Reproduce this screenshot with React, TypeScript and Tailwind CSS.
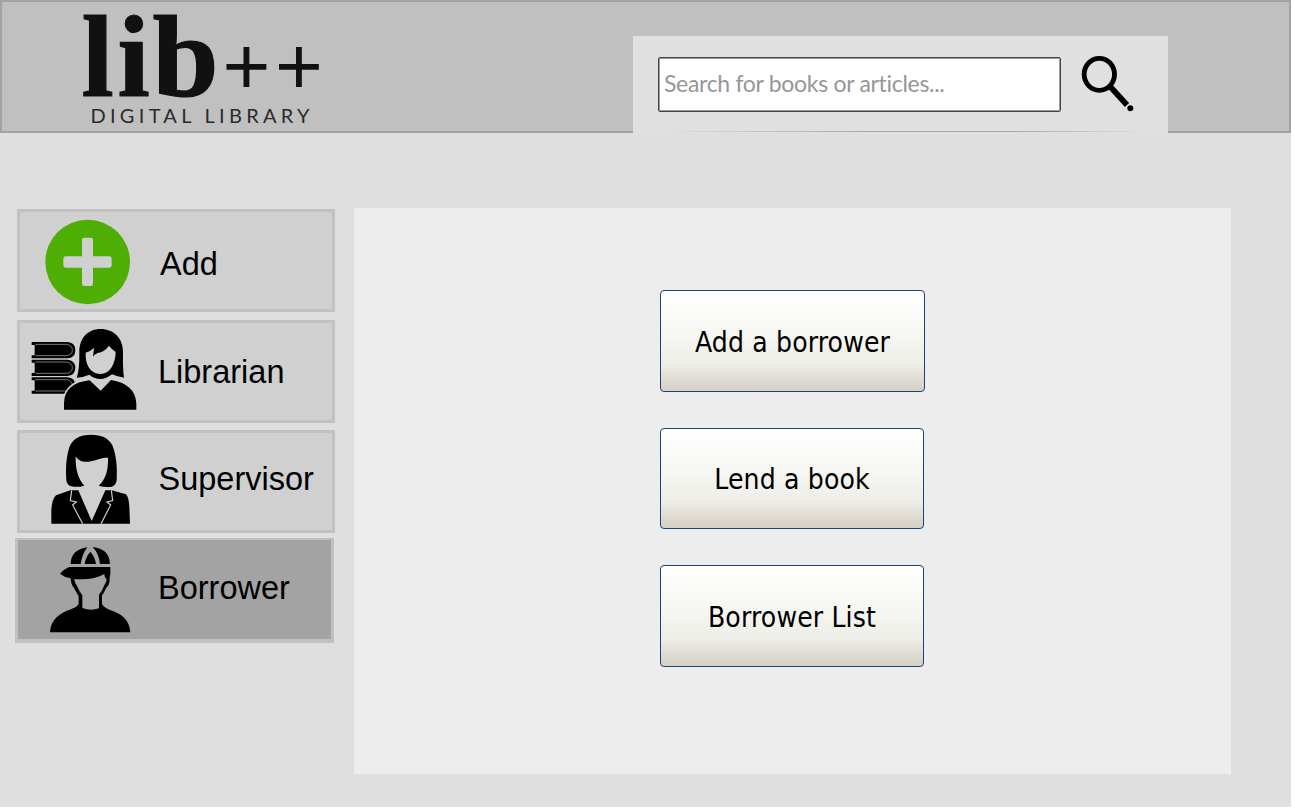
import React from "react";

function Logo() {
  return (
    <svg className="ml-[70px] h-[133px] w-[270px] shrink-0 overflow-visible" viewBox="0 0 270 133" fill="#111">
      <g fontFamily="'Liberation Serif', serif" fontWeight="700" fontSize="116" stroke="#111" strokeWidth="1.2">
        <text x="11.500" y="96">l</text>
        <text x="47.500" y="96">i</text>
        <text x="82.500" y="96" textLength="66" lengthAdjust="spacingAndGlyphs">b</text>
      </g>
      <g fontFamily="'Liberation Sans', sans-serif" fontSize="82">
        <text x="152.500" y="93.500">+</text>
        <text x="205" y="93.500">+</text>
      </g>
      <text x="20.500" y="122.500" fontFamily="Lato, sans-serif" fontSize="20" textLength="219" fill="#2b2b2b">
        DIGITAL LIBRARY
      </text>
    </svg>
  );
}

function SearchIcon() {
  return (
    <svg className="-mt-[2px] ml-[17px] h-[60px] w-[60px]" viewBox="114 84 180 180" fill="none" stroke="#000">
      <ellipse cx="178" cy="148" rx="45.500" ry="48" strokeWidth="14.500" />
      <path d="M209 183L261 240" strokeWidth="17" />
      <circle cx="271" cy="250" r="9" fill="#000" stroke="none" />
    </svg>
  );
}

function AddIcon() {
  return (
    <svg className="h-[97px] w-[130px] shrink-0" viewBox="30 36 390 291">
      <circle cx="233" cy="186" r="127" fill="#4fae03" />
      <path
        fill="#d0d0d0"
        d="M223 113h19q7 0 7 7v49h49q7 0 7 7v20q0 7-7 7h-49v48q0 7-7 7h-19q-7 0-7-7v-48h-49q-7 0-7-7v-20q0-7 7-7h49v-49q0-7 7-7z"
      />
    </svg>
  );
}

function LibrarianIcon() {
  return (
    <svg className="h-[97px] w-[130px] shrink-0" viewBox="30 24 390 291">
      <g>
        {[81, 134, 187].map((y) => (
          <g key={y} transform={`translate(0 ${y})`}>
            <path d="M65 0H172Q196 2 196 24.500Q196 47 172 49H65V40H74V9H65Z" />
            <path d="M76 7H170Q187 10 187 24.500Q187 39 170 41H76" fill="none" stroke="#777" strokeWidth="3" />
          </g>
        ))}
      </g>
      <path
        d="M155 291V270Q157 222 199 199Q217 190 240 188L228 176H192Q202 160 202 100L232 30H310L350 100V190L305 188Q350 193 370 222Q386 244 386 291Z"
        fill="#d0d0d0"
      />
      <path
        fillRule="evenodd"
        d="M200 188Q209 165 208 111C208 67 236 42 271 42C312 42 339 70 339 111Q338 165 342 188Q324 186 306 178Q289 192 271 192Q254 192 238 179Q220 187 200 188ZM227 113C225 148 241 176 271 177C300 176 316 148 317 111Q306 104 297 92Q283 111 263 114Q254 118 249 125L252 98Q243 108 227 113Z"
      />
      <path d="M162 284V263C164 222 191 201 239 196L272 227L303 195C350 202 377 226 379 265V284Z" />
    </svg>
  );
}

function SupervisorIcon() {
  return (
    <svg className="h-[97px] w-[130px] shrink-0" viewBox="30 24 390 291">
      <path d="M244 29C208 29 187 42 178 67C168 98 167 132 169 165Q170 180 184 184Q202 188 223 182C204 163 196 132 197 94C205 107 219 114 243 109C264 104 277 97 294 98C295 131 289 162 266 182Q285 188 305 185Q319 181 320 164C322 128 319 90 307 61C296 39 274 29 244 29Z" />
      <path d="M124 296V256Q126 221 138 211L181 196H205L245 288L286 196H305L348 208Q356 216 358 245L360 296Z" />
      <path
        d="M185 196L181 227L199 231L188 240L218 296M304 196L308 227L291 231L302 240L273 296"
        fill="none"
        stroke="#d0d0d0"
        strokeWidth="3.5"
      />
    </svg>
  );
}

function BorrowerIcon() {
  return (
    <svg className="h-[99px] w-[130px] shrink-0" viewBox="24 21 390 297">
      <path d="M182 93Q183 50 232 43Q217 62 212 93ZM248 42Q298 47 300 93H270Q267 62 248 42ZM224 93Q227 72 241 56Q255 72 258 93Z" />
      <path
        fillRule="evenodd"
        d="M150 122Q161 109 177 102H301V123Q299 129 299 141Q298 157 289 164Q281 181 276 187V212Q279 222 300 231C334 242 359 260 361 298H120C122 260 148 241 183 229Q205 221 206 211V190Q199 178 192 165Q183 157 182 136Q163 133 150 122ZM193 138Q194 151 201 158Q207 174 217 187V225Q241 235 267 226V185Q278 172 282 158Q290 149 290 139Q282 132 283 123Q252 142 193 138Z"
      />
    </svg>
  );
}

const row = "ml-[17px] flex h-[103px] w-[318px] items-center border-[3px] border-[#c1c1c1] bg-[#d0d0d0]";
const label = "whitespace-nowrap text-[32.5px] leading-none";

function ActionButton({ children, className }: { children: React.ReactNode; className: string }) {
  return (
    <button
      className={`flex items-center justify-center rounded-[4px] border border-[#164677] bg-[linear-gradient(180deg,#ffffff_0%,#f8f8f5_35%,#eeeee8_73%,#e2ded6_86%,#d6d0c5_100%)] pt-[3px] font-['DejaVu_Sans_Condensed','DejaVu_Sans',sans-serif] text-[28px] font-normal leading-none tracking-[0.15px] text-black [font-stretch:condensed] ${className}`}
    >
      {children}
    </button>
  );
}

export default function App() {
  return (
    <div className="h-[810px] w-[1295px] overflow-hidden bg-white font-['Liberation_Sans',Arial,sans-serif] text-black">
      <div className="flex h-[807px] w-[1291px] flex-col bg-[#dfdfdf]">
        <header className="flex h-[133px] shrink-0 items-end bg-[#c0c0c0] shadow-[inset_0_0_0_2px_#a3a3a3]">
          <Logo />
          <div className="ml-[293px] flex h-[97px] w-[535px] flex-col bg-[#e0e0e0]">
            <div className="flex h-[95px] items-center pl-[25px]">
              <input
                className="mt-[2px] h-[55px] w-[403px] rounded-[2px] border border-[#444] bg-white px-[5px] pb-[3px] font-[Lato,sans-serif] text-[23px] tracking-[-0.3px] text-black shadow-[inset_0_0_0_1px_#9a9a9a] outline-none placeholder:text-[#969696]"
                placeholder="Search for books or articles..."
              />
              <SearchIcon />
            </div>
            <div className="h-px bg-[linear-gradient(90deg,transparent_5%,#a5a5a5_45%,#a5a5a5_70%,transparent_96%)]" />
          </div>
        </header>

        <div className="flex grow items-start">
          <nav className="flex w-[354px] flex-col pt-[76px]">
            <div className={row}>
              <AddIcon />
              <span className={`${label} ml-[10px] mt-[8px]`}>Add</span>
            </div>
            <div className={`${row} mt-2`}>
              <LibrarianIcon />
              <span className={`${label} ml-[8px] mt-[2px]`}>Librarian</span>
            </div>
            <div className={`${row} mt-[7px]`}>
              <SupervisorIcon />
              <span className={`${label} mb-[4px] ml-[8.5px]`}>Supervisor</span>
            </div>
            <div className="ml-[15px] mt-[5px] flex h-[105px] w-[319px] items-center border-x-[3px] border-b-4 border-t-2 border-[#c0c0c0] bg-[#a3a3a3]">
              <BorrowerIcon />
              <span className={`${label} mb-[2px] ml-[10px]`}>Borrower</span>
            </div>
          </nav>

          <main className="mt-[75px] flex h-[566px] w-[877px] flex-col items-start bg-[#ededed] pl-[306px] pt-[82px]">
            <ActionButton className="h-[102px] w-[265px]">Add a borrower</ActionButton>
            <ActionButton className="mt-9 h-[101px] w-[264px]">Lend a book</ActionButton>
            <ActionButton className="mt-9 h-[102px] w-[264px]">Borrower List</ActionButton>
          </main>
        </div>
      </div>
    </div>
  );
}
